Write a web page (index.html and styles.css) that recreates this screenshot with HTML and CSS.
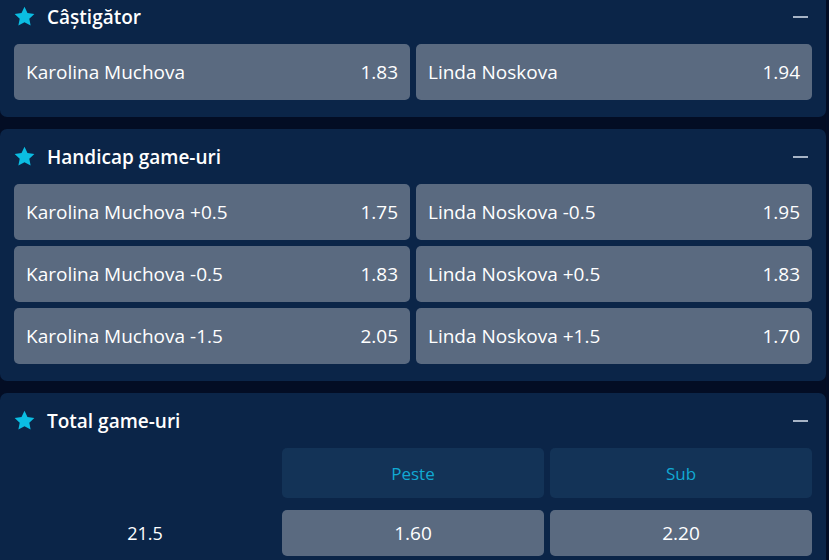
FILE: index.html
```html
<!DOCTYPE html>
<html lang="ro">
<head>
  <meta charset="UTF-8">
  <title>Piețe</title>
  <link rel="stylesheet" href="styles.css">
</head>
<body>
  <div class="markets">

    <section class="market">
      <div class="market-head">
        <svg class="star" viewBox="0 0 24 24"><path d="M12 1.8l3.1 6.6 7.2.9-5.3 5 1.4 7.1L12 17.9l-6.4 3.5L7 14.3l-5.3-5 7.2-.9z"/></svg>
        <h2>Câștigător</h2>
        <span class="collapse"></span>
      </div>
      <div class="odds-grid">
        <button class="odd"><span>Karolina Muchova</span><b>1.83</b></button>
        <button class="odd"><span>Linda Noskova</span><b>1.94</b></button>
      </div>
    </section>

    <section class="market">
      <div class="market-head">
        <svg class="star" viewBox="0 0 24 24"><path d="M12 1.8l3.1 6.6 7.2.9-5.3 5 1.4 7.1L12 17.9l-6.4 3.5L7 14.3l-5.3-5 7.2-.9z"/></svg>
        <h2>Handicap game-uri</h2>
        <span class="collapse"></span>
      </div>
      <div class="odds-grid">
        <button class="odd"><span>Karolina Muchova +0.5</span><b>1.75</b></button>
        <button class="odd"><span>Linda Noskova -0.5</span><b>1.95</b></button>
        <button class="odd"><span>Karolina Muchova -0.5</span><b>1.83</b></button>
        <button class="odd"><span>Linda Noskova +0.5</span><b>1.83</b></button>
        <button class="odd"><span>Karolina Muchova -1.5</span><b>2.05</b></button>
        <button class="odd"><span>Linda Noskova +1.5</span><b>1.70</b></button>
      </div>
    </section>

    <section class="market">
      <div class="market-head">
        <svg class="star" viewBox="0 0 24 24"><path d="M12 1.8l3.1 6.6 7.2.9-5.3 5 1.4 7.1L12 17.9l-6.4 3.5L7 14.3l-5.3-5 7.2-.9z"/></svg>
        <h2>Total game-uri</h2>
        <span class="collapse"></span>
      </div>
      <div class="total-grid">
        <div></div>
        <div class="total-label">Peste</div>
        <div class="total-label">Sub</div>
        <div class="total-line">21.5</div>
        <button class="odd centered"><b>1.60</b></button>
        <button class="odd centered"><b>2.20</b></button>
      </div>
    </section>

  </div>
</body>
</html>
```

FILE: styles.css
```css
* {
  box-sizing: border-box;
}
body {
  margin: 0;
  background: #030d24;
  font-family: "Open Sans", "Noto Sans", sans-serif;
  color: #fff;
  overflow: hidden;
}
.markets {
  width: 826px;
  margin-top: -11px;
  display: flex;
  flex-direction: column;
  gap: 12px;
}
.market {
  background: #0b2548;
  border-radius: 7px;
  padding: 0 14px 17px 14px;
}
.market-head {
  height: 55px;
  display: flex;
  align-items: center;
}
.star {
  width: 23px;
  height: 23px;
  fill: #0bbde2;
  margin-left: -1px;
  margin-right: 11px;
  flex-shrink: 0;
}
.market-head h2 {
  margin: 0;
  font-size: 19px;
  font-weight: 600;
  flex: 1;
}
.collapse {
  width: 15px;
  height: 2px;
  background: #a7b4c6;
  margin-right: 4px;
}
.odds-grid {
  display: grid;
  grid-template-columns: 1fr 1fr;
  gap: 6px;
}
.odd {
  height: 56px;
  border: none;
  border-radius: 5px;
  background: #5a6a80;
  color: #fff;
  font-family: inherit;
  font-size: 19px;
  padding: 0 12px 0 12px;
  display: flex;
  align-items: center;
  justify-content: space-between;
  cursor: pointer;
}
.odd b {
  font-weight: 400;
}
.total-grid {
  display: grid;
  grid-template-columns: repeat(3, 1fr);
  grid-template-rows: 50px 46px;
  column-gap: 6px;
  row-gap: 12px;
}
.total-label {
  background: #133357;
  border-radius: 5px;
  color: #11a9d3;
  font-size: 17px;
  display: flex;
  align-items: center;
  justify-content: center;
}
.total-line {
  font-size: 18px;
  display: flex;
  align-items: center;
  justify-content: center;
}
.odd.centered {
  height: auto;
  justify-content: center;
  font-size: 19px;
}
```
